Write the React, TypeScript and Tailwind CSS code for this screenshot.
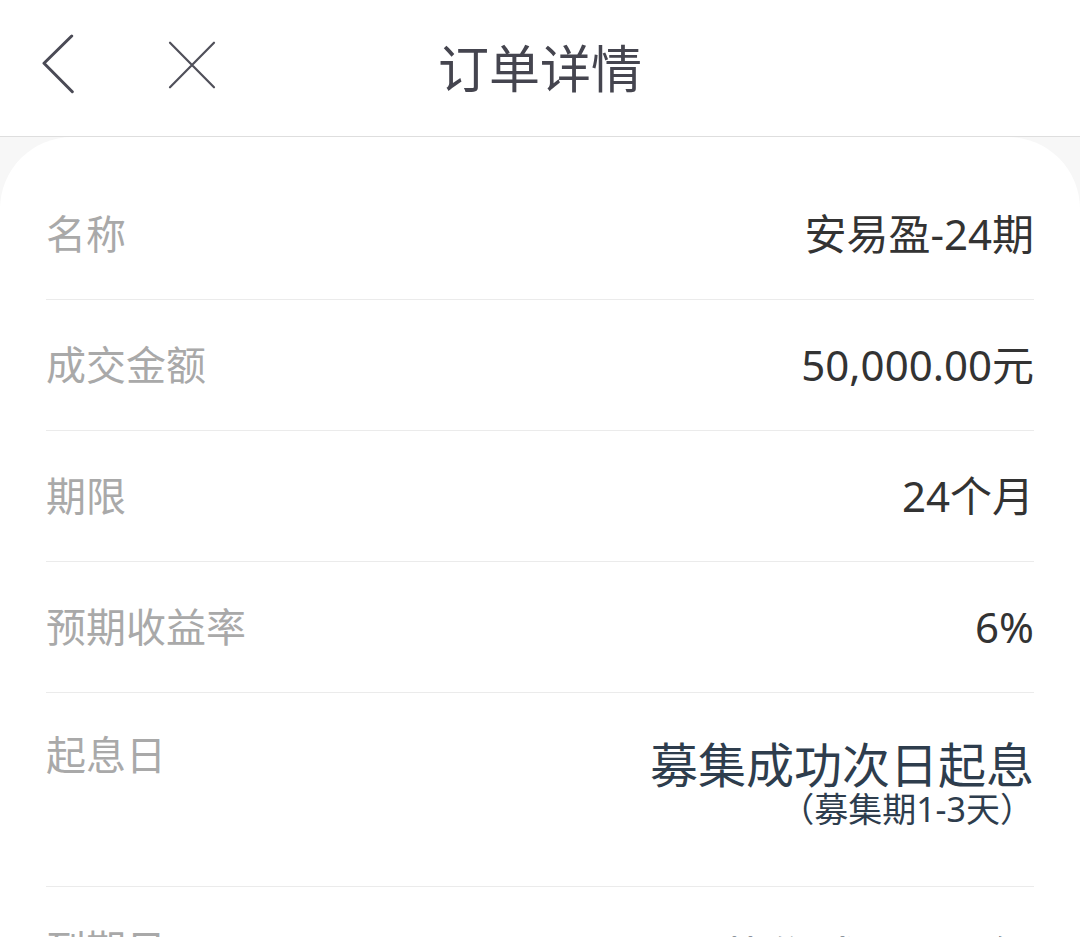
import React from "react";

const FONT = "font-['Noto_Sans','Noto_Sans_CJK_SC',sans-serif]";

interface Row {
  label: string;
  value: string;
}

const ROWS: Row[] = [
  { label: "名称", value: "安易盈-24期" },
  { label: "成交金额", value: "50,000.00元" },
  { label: "期限", value: "24个月" },
  { label: "预期收益率", value: "6%" },
];

const BackIcon = () => (
  <svg width="40" height="68" viewBox="0 0 40 68" fill="none">
    <polyline
      points="31.7,2 4,29.3 32.3,57.7"
      stroke="#4a4a55"
      strokeWidth="3"
      strokeLinecap="round"
      strokeLinejoin="round"
    />
  </svg>
);

const CloseIcon = () => (
  <svg width="52" height="56" viewBox="0 0 52 56" fill="none">
    <path d="M4 2.7 L48 47.3 M48 2.7 L4 47.3" stroke="#50505a" strokeWidth="2.2" strokeLinecap="round" />
  </svg>
);

const SimpleRow = ({ label, value }: Row) => (
  <div className="flex h-[131px] items-center justify-between border-b border-[#ebebeb]">
    <span className="text-[40px] leading-[56px] text-[#a9a9a9]">{label}</span>
    <span className="text-[42px] leading-[56px] text-[#333333]">{value}</span>
  </div>
);

export default function App() {
  return (
    <div className={`${FONT} min-h-screen bg-[#f7f7f7]`}>
      {/* 顶部导航 */}
      <div className="grid h-[137px] grid-cols-3 items-center border-b border-[#dedede] bg-white px-[40px]">
        <div className="flex items-center">
          <BackIcon />
          <div className="ml-[86px]">
            <CloseIcon />
          </div>
        </div>
        <div className="text-center text-[51px] leading-[60px] text-[#45454f]">订单详情</div>
        <div />
      </div>

      {/* 订单信息 */}
      <div className="rounded-t-[72px] bg-white px-[46px] pt-[32px]">
        {ROWS.map((row) => (
          <SimpleRow key={row.label} {...row} />
        ))}
        <div className="flex h-[194px] items-start justify-between border-b border-[#ebebeb] pt-[34px]">
          <span className="text-[40px] leading-[56px] text-[#a9a9a9]">起息日</span>
          <div className="mt-[12px] flex flex-col items-end">
            <span className="text-[48px] leading-[52px] text-[#2e3d4d]">募集成功次日起息</span>
            <span className="text-[34px] leading-[36px] text-[#2e3d4d]">（募集期1-3天）</span>
          </div>
        </div>
        <div className="flex h-[194px] items-start justify-between pt-[34px]">
          <span className="text-[40px] leading-[56px] text-[#a9a9a9]">到期日</span>
          <div className="mt-[12px] flex flex-col items-end">
            <span className="text-[48px] leading-[52px] text-[#2e3d4d]">募集成功后2年</span>
          </div>
        </div>
      </div>
    </div>
  );
}
